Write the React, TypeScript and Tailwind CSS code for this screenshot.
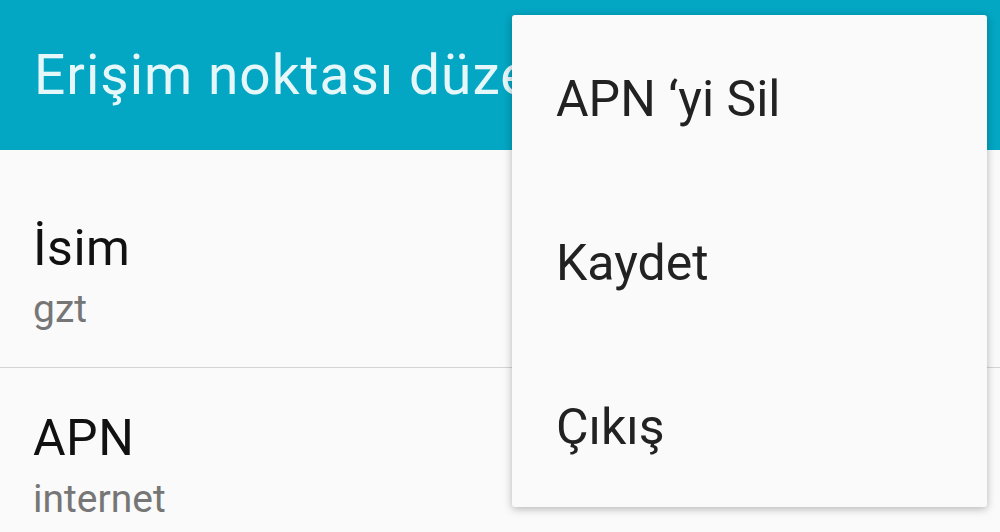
const items = ["APN ‘yi Sil", "Kaydet", "Çıkış"];

const fields = [
  { title: "İsim", value: "gzt" },
  { title: "APN", value: "internet" },
];

export default function App() {
  return (
    <div
      className="relative w-[1000px] h-[532px] overflow-hidden bg-[#fafafa]"
      style={{ fontFamily: "Roboto, 'Noto Sans', sans-serif" }}
    >
      {/* Toolbar */}
      <div className="h-[150px] bg-[#03a6c3] flex items-center pl-[34px]">
        <h1 className="text-[55px] leading-none tracking-[1px] text-[#e6f7fa] whitespace-nowrap">
          Erişim noktası düzenle
        </h1>
      </div>

      {/* Preference list */}
      <div className="pt-[25px]">
        {fields.map((f, i) => (
          <div
            key={f.title}
            className={
              i === 0
                ? "pl-[33px] pt-[48px] pb-[38px] border-b border-[#d4d4d4]"
                : "pl-[33px] pt-[45px] pb-[38px]"
            }
          >
            <div className="text-[50px] leading-none tracking-[0.5px] text-[#111111]">{f.title}</div>
            <div className="mt-[17px] text-[39px] leading-none text-[#767676]">{f.value}</div>
          </div>
        ))}
      </div>

      {/* Overflow menu */}
      <div className="absolute left-[512px] top-[15px] w-[475px] rounded-[3px] bg-[#fafafa] shadow-[0_2px_8px_rgba(0,0,0,0.28)] flex flex-col">
        {items.map((label) => (
          <div key={label} className="h-[164px] flex items-center pl-[44px] pt-[4px]">
            <span className="text-[50px] leading-none text-[#222222]">{label}</span>
          </div>
        ))}
      </div>
    </div>
  );
}
